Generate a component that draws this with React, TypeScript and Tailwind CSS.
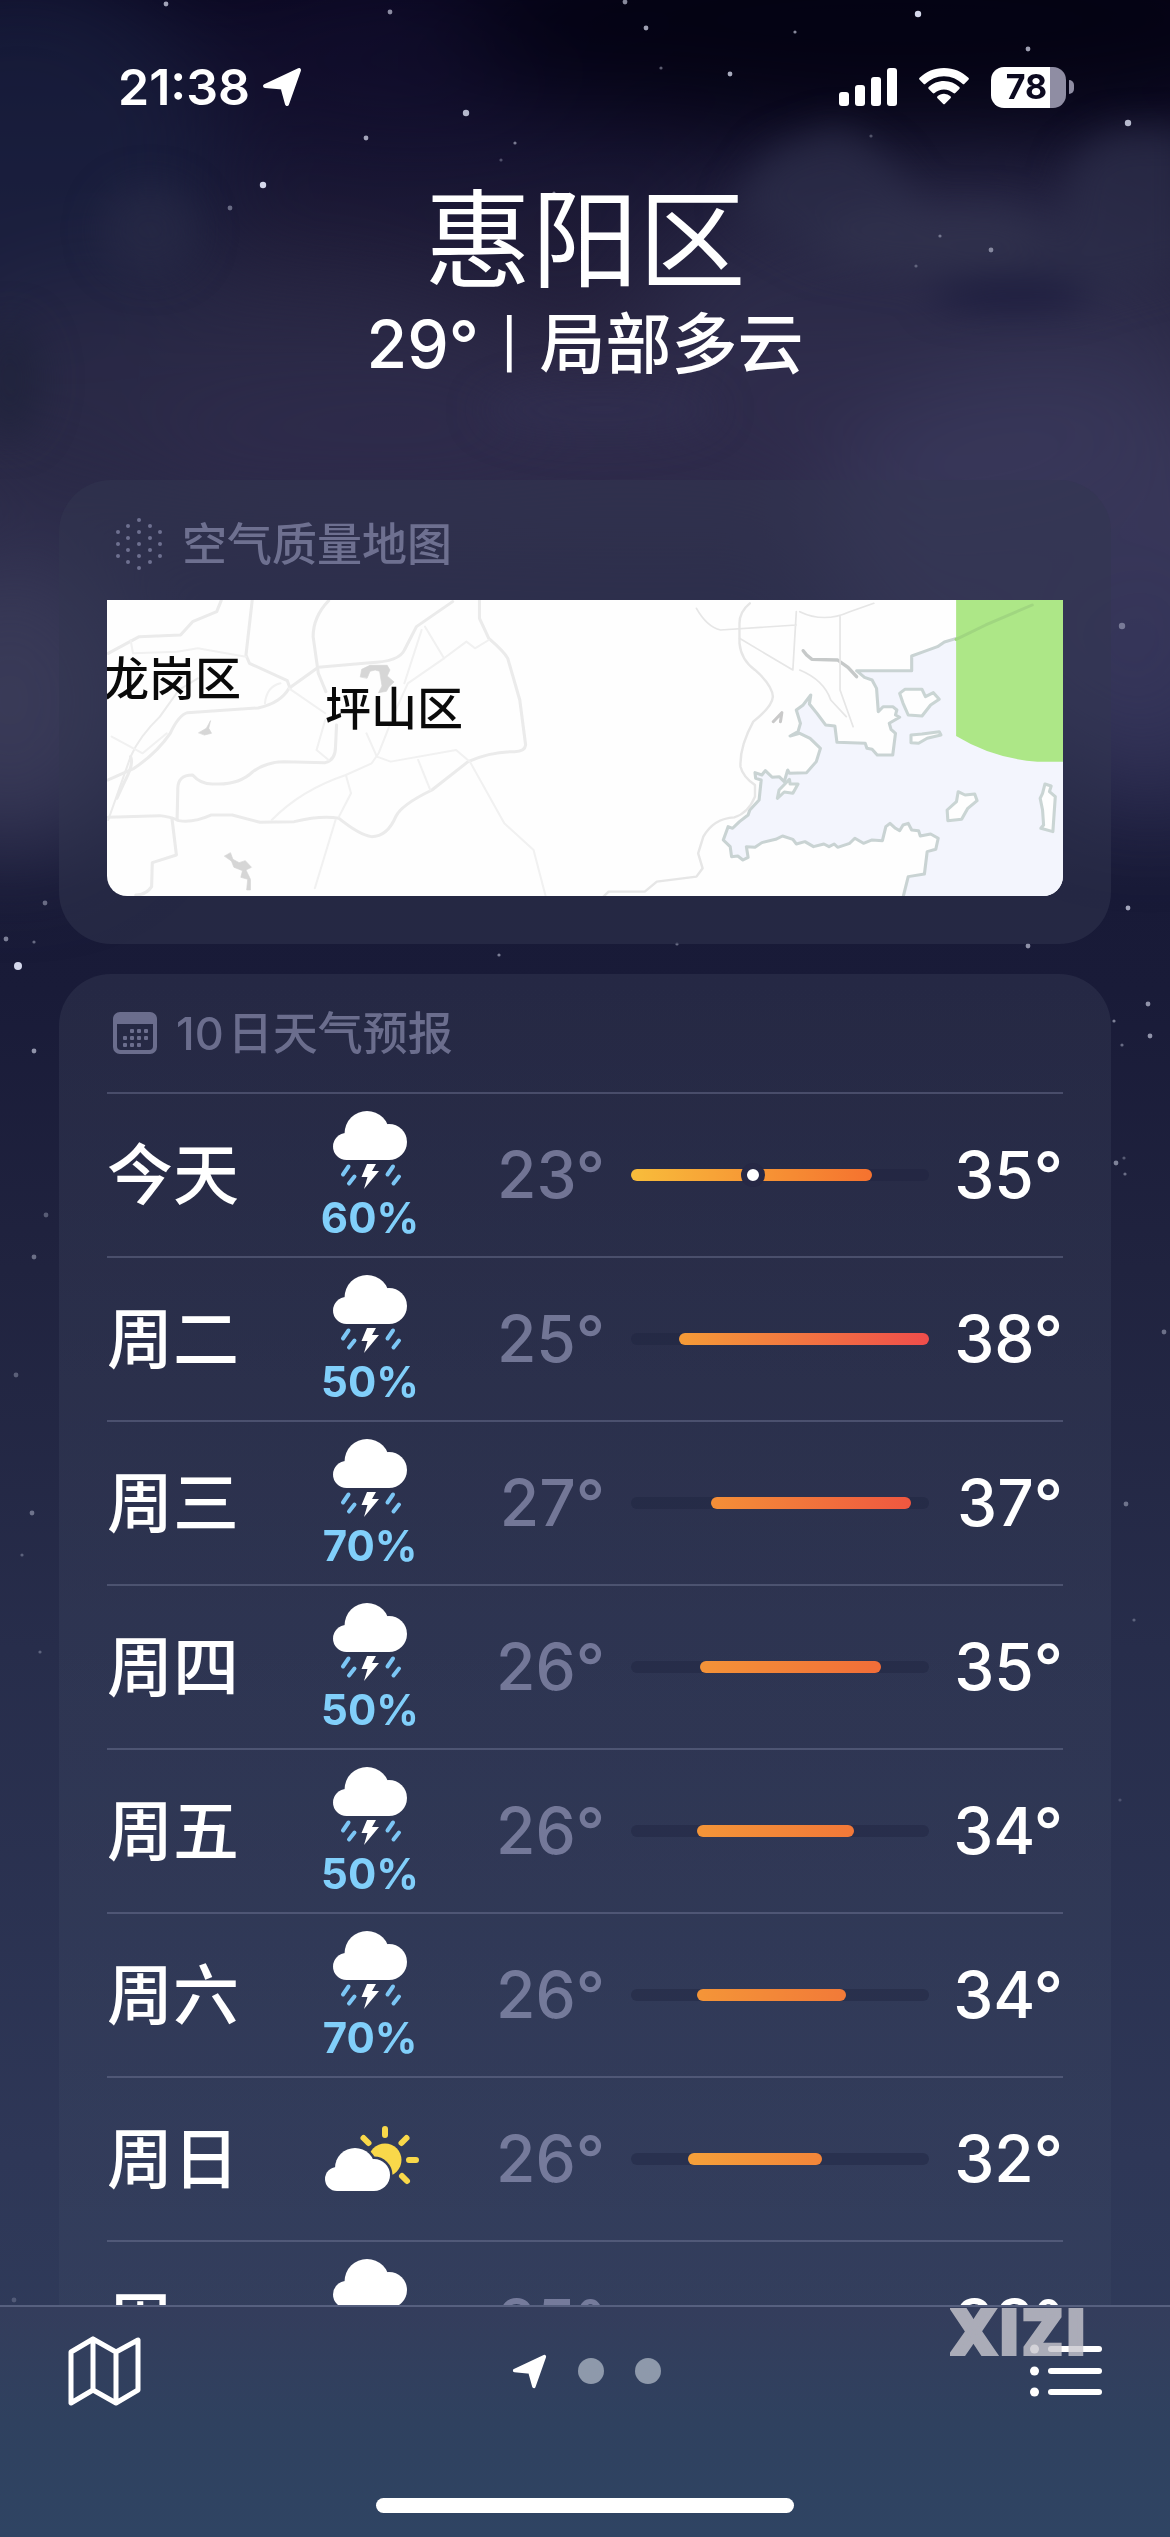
import React from "react";

type Day = {
  name: string;
  icon: "storm" | "sun";
  chance?: string;
  low: number;
  high: number;
  start: number;
  width: number;
  from: string;
  to: string;
  now?: number;
};

const DAYS: Day[] = [
  { name: "今天", icon: "storm", chance: "60%", low: 23, high: 35, start: 0, width: 81, from: "#f8bd3b", to: "#f5722f", now: 41 },
  { name: "周二", icon: "storm", chance: "50%", low: 25, high: 38, start: 16, width: 84, from: "#f59b37", to: "#ef4d4b" },
  { name: "周三", icon: "storm", chance: "70%", low: 27, high: 37, start: 27, width: 67, from: "#f48f37", to: "#ef5740" },
  { name: "周四", icon: "storm", chance: "50%", low: 26, high: 35, start: 23, width: 61, from: "#f49338", to: "#f16d38" },
  { name: "周五", icon: "storm", chance: "50%", low: 26, high: 34, start: 22, width: 53, from: "#f49538", to: "#f27838" },
  { name: "周六", icon: "storm", chance: "70%", low: 26, high: 34, start: 22, width: 50, from: "#f49538", to: "#f27a38" },
  { name: "周日", icon: "sun", low: 26, high: 32, start: 19, width: 45, from: "#f5a03a", to: "#f38539" },
  { name: "周一", icon: "storm", chance: "50%", low: 25, high: 33, start: 15, width: 53, from: "#f59b37", to: "#f38239" },
];

const STARS: [number, number, number, number][] = [
  [166, 4, 3, 0.7], [390, 12, 3, 0.6], [625, 2, 3, 0.6], [646, 28, 3, 0.7], [918, 14, 4, 0.95],
  [795, 32, 2, 0.6], [1028, 49, 3, 0.7], [661, 68, 2, 0.4], [730, 74, 3, 0.75], [466, 113, 4, 0.8],
  [1128, 123, 4, 0.8], [366, 138, 3, 0.7], [515, 143, 2, 0.5], [501, 160, 2, 0.3], [263, 185, 4, 0.95],
  [230, 208, 3, 0.4], [554, 193, 2, 0.5], [940, 236, 2, 0.4], [991, 250, 3, 0.5], [916, 266, 2, 0.3],
  [871, 136, 2, 0.3], [1122, 626, 4, 0.4], [18, 966, 5, 0.95], [1128, 908, 3, 0.7], [45, 903, 3, 0.4],
  [6, 939, 3, 0.5], [34, 942, 2, 0.4], [1028, 946, 3, 0.6], [499, 955, 2, 0.5], [677, 944, 2, 0.4],
  [34, 1051, 3, 0.6], [1148, 1004, 3, 0.6], [1114, 1021, 2, 0.5], [1150, 1036, 3, 0.6], [1122, 1045, 2, 0.4],
  [1116, 1163, 3, 0.5], [1125, 1174, 2, 0.4], [1124, 1158, 2, 0.3], [34, 1257, 3, 0.4], [46, 1215, 3, 0.3],
  [1164, 1332, 3, 0.4], [16, 1375, 3, 0.3], [32, 1513, 3, 0.4], [1126, 1504, 3, 0.4], [22, 1555, 2, 0.3],
  [1134, 1620, 2, 0.3], [40, 1652, 2, 0.3], [1120, 1800, 2, 0.2], [14, 2300, 3, 0.2],
];

function Sky() {
  return (
    <svg
      aria-hidden="true"
      className="pointer-events-none absolute inset-0 h-full w-full"
      viewBox="0 0 1170 2537"
      preserveAspectRatio="xMidYMin slice"
    >
      <defs>
        <filter id="haze" x="-100%" y="-100%" width="300%" height="300%" colorInterpolationFilters="sRGB">
          <feGaussianBlur stdDeviation="50" />
        </filter>
        <filter id="puff" x="-100%" y="-100%" width="300%" height="300%" colorInterpolationFilters="sRGB">
          <feGaussianBlur stdDeviation="18" />
        </filter>
      </defs>
      <g filter="url(#haze)">
        <ellipse cx="20" cy="160" rx="200" ry="200" fill="#1a2140" opacity="0.7" />
        <ellipse cx="420" cy="60" rx="220" ry="90" fill="#120d2e" opacity="0.5" />
        <ellipse cx="900" cy="20" rx="440" ry="110" fill="#030212" opacity="0.9" />
        <ellipse cx="230" cy="400" rx="330" ry="130" fill="#2b2b48" opacity="0.75" />
        <ellipse cx="940" cy="330" rx="300" ry="160" fill="#2f2f4d" opacity="0.75" />
        <ellipse cx="640" cy="450" rx="500" ry="90" fill="#302c4d" opacity="0.7" />
        <ellipse cx="1060" cy="540" rx="240" ry="180" fill="#3b3a5c" opacity="0.8" />
        <ellipse cx="10" cy="700" rx="130" ry="150" fill="#3b3c59" opacity="0.9" />
        <ellipse cx="1150" cy="690" rx="110" ry="110" fill="#36365a" opacity="0.8" />
      </g>
      <g filter="url(#puff)">
        <path d="M730 210 L770 150 L840 125 L890 160 L930 220 L1000 205 L1060 230 L1070 160 L1110 130 L1190 130 V270 L1080 300 L960 280 L820 260 Z" fill="#2c2d4a" opacity="0.75" />
        <ellipse cx="930" cy="240" rx="110" ry="34" fill="#34344f" opacity="0.5" />
        <ellipse cx="1010" cy="295" rx="80" ry="14" fill="#17163a" opacity="0.8" />
        <ellipse cx="150" cy="230" rx="50" ry="46" fill="#2b2d4a" opacity="0.5" />
        <ellipse cx="10" cy="380" rx="34" ry="60" fill="#1c2238" opacity="0.6" />
        <ellipse cx="600" cy="410" rx="120" ry="30" fill="#35345a" opacity="0.3" />
      </g>
      {STARS.map(([x, y, r, o]) => (
        <circle key={`${x}-${y}`} cx={x} cy={y} r={r * 0.8} fill="#dfe3f5" opacity={o} />
      ))}
    </svg>
  );
}

function LocationArrow({ className }: { className: string }) {
  return (
    <svg aria-hidden="true" viewBox="0 0 40 40" className={className} fill="currentColor">
      <path
        d="M37 3 L25 37 L20.500 20.500 L3 19 Z"
        stroke="currentColor"
        strokeWidth="4"
        strokeLinejoin="round"
      />
    </svg>
  );
}

function StatusBar() {
  return (
    <div className="flex h-[126px] items-center justify-between pt-12 pr-24 pl-[118px]">
      <div className="flex items-center gap-3">
        <time className="text-[50px] leading-none font-semibold">21:38</time>
        <LocationArrow className="size-10" />
      </div>
      <div className="flex items-center gap-[22px]">
        <svg role="img" aria-label="信号" viewBox="0 0 58 38" className="h-[38px] w-[58px]" fill="currentColor">
          <rect x="0" y="24" width="10" height="14" rx="3" />
          <rect x="16" y="17" width="10" height="21" rx="3" />
          <rect x="32" y="9" width="10" height="29" rx="3" />
          <rect x="48" y="0" width="10" height="38" rx="3" />
        </svg>
        <svg role="img" aria-label="无线网络" viewBox="0 0 50 38" className="h-[38px] w-[50px]" fill="currentColor">
          <path d="M25 0C15.500 0 6.800 3.700 0.600 9.800a1.400 1.400 0 0 0 0 2L4.500 15.800a1.400 1.400 0 0 0 2 0C11.300 11.100 17.800 8.200 25 8.200s13.700 2.900 18.500 7.600a1.400 1.400 0 0 0 2 0l3.900-4a1.400 1.400 0 0 0 0-2C43.200 3.700 34.500 0 25 0Z" />
          <path d="M25 13c-5.900 0-11.300 2.300-15.300 6.100a1.400 1.400 0 0 0 0 2l4 4a1.400 1.400 0 0 0 1.900 0A13.600 13.600 0 0 1 25 21.400c3.600 0 6.900 1.400 9.400 3.700a1.400 1.400 0 0 0 1.900 0l4-4a1.400 1.400 0 0 0 0-2A22.200 22.200 0 0 0 25 13Z" />
          <path d="M25 25.700c-2.500 0-4.800 1-6.500 2.600a1.300 1.300 0 0 0 0 1.900l5.500 5.600a1.400 1.400 0 0 0 2 0l5.500-5.600a1.300 1.300 0 0 0 0-1.900 9.400 9.400 0 0 0-6.500-2.600Z" />
        </svg>
        <div className="flex items-center gap-[3px]">
          <div className="flex h-[41px] w-[75px] items-center justify-center rounded-[13px] bg-[linear-gradient(90deg,#fff_79%,#8f8da3_79%)] pr-1">
            <span className="text-[34px] leading-none font-bold text-[#0c0a20]">78</span>
          </div>
          <span className="h-[14px] w-[5px] rounded-r-full bg-[#8f8da3]" />
        </div>
      </div>
    </div>
  );
}

function AirQualityIcon() {
  const dots: [number, number][] = [
    [24, 3], [13, 9], [35, 9], [3, 15], [24, 15], [45, 15], [13, 21], [35, 21], [24, 27],
    [3, 27], [45, 27], [13, 33], [35, 33], [3, 39], [24, 39], [45, 39], [13, 45], [35, 45], [24, 51],
  ];
  return (
    <svg aria-hidden="true" viewBox="0 0 48 54" className="h-[54px] w-12" fill="currentColor">
      {dots.map(([x, y]) => (
        <circle key={`${x}-${y}`} cx={x} cy={y} r="2" />
      ))}
    </svg>
  );
}

function CalendarIcon() {
  const dots: [number, number][] = [
    [18, 18], [25, 18], [32, 18], [11, 25], [18, 25], [25, 25], [32, 25], [11, 32], [18, 32], [25, 32],
  ];
  return (
    <svg aria-hidden="true" viewBox="0 0 44 42" className="h-[42px] w-11" fill="currentColor">
      <path
        fillRule="evenodd"
        d="M7 0h30a7 7 0 0 1 7 7v28a7 7 0 0 1-7 7H7a7 7 0 0 1-7-7V7a7 7 0 0 1 7-7ZM4 12v22a4 4 0 0 0 4 4h28a4 4 0 0 0 4-4V12Z"
      />
      {dots.map(([x, y]) => (
        <rect key={`${x}-${y}`} x={x - 1} y={y - 1} width="4" height="4" rx="1" />
      ))}
    </svg>
  );
}

function AirMap() {
  return (
    <div className="relative h-[296px] overflow-hidden rounded-b-[20px] bg-[#fefefe] text-[#0a0a0a]">
      <svg
        aria-hidden="true"
        viewBox="0 0 956 296"
        preserveAspectRatio="none"
        className="h-full w-full"
        fill="none"
        strokeLinejoin="round"
        strokeLinecap="round"
      >
        <g transform="translate(-47 -130) scale(0.3444 0.3333)">
          <g stroke="#ebebeb" strokeWidth="9">
            <path d="M140 550 L230 500 L350 495 L385 455 L455 425 L468 392" />
            <path d="M558 392 L540 555 L550 580 L660 632 L668 655" />
            <path d="M780 392 Q735 440 735 500 L750 610 L772 665" />
            <path d="M140 1050 L205 860 Q230 800 290 740 L345 660 L400 625" strokeWidth="6" />
            <path d="M140 930 L215 895 Q280 850 320 790 Q345 735 370 728 L575 714 Q640 700 665 655 L750 592 L900 578 Q985 575 1000 540 L1035 470 L1140 395" />
            <path d="M1218 392 V445 L1245 505 Q1290 545 1300 565 L1335 690 L1352 825 Q1350 845 1320 845 Q1250 845 1185 875 L1080 960 Q990 1005 975 1040 Q950 1100 905 1100 Q870 1095 810 1045 Q760 1035 680 1055 L580 1057 L500 1035 L440 1035 Q385 1060 345 1052 Q320 1040 290 1037 L140 1042" />
            <path d="M340 1050 L342 960 Q340 915 385 915 Q410 945 450 942 Q520 945 560 905 Q600 875 650 875 L770 878 Q800 870 800 830 L803 765" />
            <path d="M325 1045 L338 1155 L268 1178 L266 1250 Q250 1275 220 1275" />
            <path d="M205 860 Q215 880 190 930 L165 985" />
          </g>
          <g stroke="#f1f1f1" strokeWidth="6">
            <path d="M205 510 L212 550 L340 545 L400 535 L540 560" />
            <path d="M150 800 L240 850 L310 790" />
            <path d="M615 1050 Q700 960 830 915 L845 970 L810 1040 M830 915 L905 880 L925 850 L975 720 L1010 640 L1115 565 L1180 515 L1205 535 L1245 510" />
            <path d="M1060 470 L1115 565 M1050 480 L1000 640 M770 750 L745 840 L780 870 M890 790 L920 860 L960 875 L1150 840 L1190 875 L1290 1060 L1375 1140 L1410 1278" />
            <path d="M1040 870 L1075 960 M800 1050 L740 1255 M665 655 L770 730 M640 640 Q600 650 595 700" />
          </g>
          <g fill="#d6d6d6" stroke="#d6d6d6" strokeWidth="2">
            <path d="M872 620 L876 598 L900 586 H950 L958 600 L950 618 L970 636 L955 650 L948 664 L925 668 L935 648 L928 604 L915 600 L900 604 L892 624 Z" />
            <path d="M403 788 L425 775 L437 752 L432 775 L440 790 L420 795 Z" />
            <path d="M478 1158 L495 1148 L502 1168 L520 1178 L538 1172 L556 1192 L540 1200 L553 1228 V1260 H542 L545 1228 L525 1222 L530 1202 L505 1192 L498 1174 Z" />
          </g>
        </g>
        <g transform="translate(493 -20) scale(0.3444 0.3333)">
          <path
            fill="#f3f5fd"
            stroke="#c9d3d3"
            strokeWidth="9"
            d="M1360 60 H1260 L1120 130 L1045 172 L1000 186 L980 200 L940 215 L905 228 V272 H745 L768 292 L790 300 L803 325 L808 395 L822 380 L850 380 L862 390 L858 405 L870 412 L840 430 L845 448 L858 460 L850 525 H805 L790 508 L775 505 L770 490 L688 487 L682 438 L655 435 L630 400 L608 372 L612 345 L590 375 L570 390 L582 430 L575 455 L552 468 L580 460 L610 475 L640 505 L628 545 L600 578 L550 580 L545 570 L535 605 L520 590 L500 592 L480 572 L470 585 L450 578 L452 595 L468 600 L462 660 L435 690 L430 705 L405 725 L385 745 L372 740 L358 780 L378 800 L382 830 L400 828 L415 840 L430 832 L425 800 L450 802 L470 788 L510 778 L530 768 L560 778 L570 792 L595 785 L620 800 L650 792 L665 800 L680 792 L690 802 L725 790 L740 775 L765 790 L790 780 L820 782 L830 740 L842 730 L858 745 L870 752 L880 735 L895 730 L905 750 L925 752 L930 768 L960 762 L982 775 L975 808 L950 815 L942 882 L895 890 L878 960 H1400 Z"
          />
          <path stroke="#c6c9c9" strokeWidth="10" d="M590 212 L600 225 L615 238 L690 240 L720 262 L745 290" />
          <g fill="#fefefe" stroke="#cad5d4" strokeWidth="9">
            <path d="M870 340 L885 328 H935 L945 350 L968 338 L985 358 L960 375 L935 408 L895 405 L880 370 Z" />
            <path d="M903 465 L935 462 L985 455 L990 465 L950 475 L925 490 L903 488 Z" />
            <path d="M1040 635 L1060 645 L1088 642 L1095 662 L1068 685 L1050 718 L1010 722 L1008 690 L1035 665 Z" />
            <path d="M1285 640 L1292 612 L1310 618 L1305 635 L1322 650 L1315 755 L1280 745 L1288 735 L1285 690 L1278 655 Z" />
            <path d="M515 655 L520 630 L550 598 L552 612 L575 612 L560 640 L535 636 Z" />
          </g>
          <path stroke="#c9c9c9" strokeWidth="9" d="M503 425 L528 398 L524 425" />
          <g stroke="#e6e6e6" strokeWidth="7">
            <path d="M435 70 Q405 95 405 130 V190 Q410 240 450 270 Q500 315 502 350 Q500 380 445 425 Q405 500 408 560 Q415 590 450 615 L450 650 Q430 700 390 712 Q330 715 300 770 L285 820 L298 865 L280 890 L165 905 L130 935 L25 935 L10 950" />
            <path d="M280 85 Q310 140 350 150 L570 135 M405 175 L560 270 L570 95 M580 95 Q650 130 725 95 L795 70 M697 110 L697 330 L735 440 M580 270 Q650 300 670 360 L715 410" strokeWidth="5" />
          </g>
          <path d="M1034 60 H1346 V545 H1270 Q1140 535 1034 468 Z" fill="#ade787" />
          <path d="M1034 178 L1120 135 L1255 75" stroke="#a0d680" strokeWidth="9" />
        </g>
      </svg>
      <span className="absolute top-[55px] -left-1 text-[46px] leading-none font-medium whitespace-nowrap">龙岗区</span>
      <span className="absolute top-[85px] left-[218px] text-[46px] leading-none font-medium whitespace-nowrap">坪山区</span>
    </div>
  );
}

function StormIcon() {
  return (
    <svg role="img" aria-label="雷阵雨" viewBox="0 0 74 78" className="h-[78px] w-[74px]">
      <g fill="#fff">
        <circle cx="34" cy="22.500" r="22.500" />
        <circle cx="56" cy="31" r="18" />
        <circle cx="13.500" cy="35.500" r="13.500" />
        <rect x="13.500" y="30" width="43" height="19" />
        <path d="M34 53h9l-4 7h7L31 78l3.500-12h-6Z" />
      </g>
      <path
        d="M15.500 55.500l-5.500 8M21.500 65.500l-5.500 7M60 55.500l-5.500 8M66 65.500l-5.500 7"
        stroke="#7cc6f5"
        strokeWidth="4"
        strokeLinecap="round"
      />
    </svg>
  );
}

function SunCloudIcon() {
  return (
    <svg role="img" aria-label="局部多云" viewBox="0 0 95 66" className="ml-1 h-[66px] w-[95px]">
      <mask id="behind-cloud">
        <rect width="95" height="66" fill="#fff" />
        <g fill="#000" stroke="#000" strokeWidth="5">
          <circle cx="30" cy="42" r="20" />
          <circle cx="49" cy="49" r="16" />
        </g>
      </mask>
      <circle cx="60" cy="34" r="16.500" fill="#f9d84a" mask="url(#behind-cloud)" />
      <path
        d="M60 3v6M38.500 12l5 5M81.500 12l-5 5M84 34h7M77 50l5 5"
        stroke="#f9d84a"
        strokeWidth="6"
        strokeLinecap="round"
      />
      <g fill="#fff">
        <circle cx="30" cy="42" r="20" />
        <circle cx="49" cy="49" r="16" />
        <circle cx="12" cy="53" r="12" />
        <rect x="12" y="48" width="37" height="17" />
      </g>
    </svg>
  );
}

function DayRow({ day }: { day: Day }) {
  return (
    <li className="grid h-[164px] grid-cols-[200px_126px_172px_1fr_134px] items-center border-t-2 border-[#8a8fae]/35">
      <span className="text-[66px] leading-none font-medium">{day.name}</span>
      <div className="flex flex-col items-center gap-2">
        {day.icon === "storm" ? <StormIcon /> : <SunCloudIcon />}
        {day.chance && (
          <span className="text-[42px] leading-none font-bold text-[#81cffa]">{day.chance}</span>
        )}
      </div>
      <span className="text-right text-[64px] leading-none font-medium text-[#9a9cbe]/65">{day.low}°</span>
      <div className="pl-[26px]">
        <div className="relative h-3 rounded-full bg-[#1e223e]/40">
          <div
            className="absolute inset-y-0 rounded-full"
            style={{
              left: `${day.start}%`,
              width: `${day.width}%`,
              backgroundImage: `linear-gradient(90deg, ${day.from}, ${day.to})`,
            }}
          />
          {day.now !== undefined && (
            <div
              className="absolute -top-[6px] size-6 -translate-x-1/2 rounded-full border-6 border-[#262845] bg-white"
              style={{ left: `${day.now}%` }}
            />
          )}
        </div>
      </div>
      <span className="text-right text-[64px] leading-none font-medium">{day.high}°</span>
    </li>
  );
}

function BottomBar() {
  return (
    <footer className="relative flex h-[232px] shrink-0 flex-col items-center justify-between border-t-2 border-[#56607f] bg-linear-to-b from-[#343d5c] via-[#2f415f] to-[#2f4463] pb-6">
      <nav className="flex w-full items-center justify-between px-[66px] pt-[28px]">
        <button type="button" aria-label="地图">
          <svg
            viewBox="0 0 76 72"
            className="h-[72px] w-[76px]"
            fill="none"
            stroke="currentColor"
            strokeWidth="5"
            strokeLinejoin="round"
            strokeLinecap="round"
          >
            <path d="M5 17 L27 4 L50 17 L72 5 V55 L50 68 L27 55 L5 68 Z M27 4 V55 M50 17 V68" />
          </svg>
        </button>
        <div className="flex items-center gap-[31px]">
          <button type="button" aria-label="当前位置">
            <LocationArrow className="size-[35px]" />
          </button>
          <button type="button" aria-label="第二个城市" className="size-[26px] rounded-full bg-[#8e99ab]" />
          <button type="button" aria-label="第三个城市" className="size-[26px] rounded-full bg-[#8e99ab]" />
        </div>
        <button type="button" aria-label="城市列表">
          <svg viewBox="0 0 74 54" className="h-[54px] w-[74px]" fill="currentColor">
            <circle cx="4.500" cy="5" r="4.500" />
            <circle cx="4.500" cy="27" r="4.500" />
            <circle cx="4.500" cy="48" r="4.500" />
            <rect x="18" y="2" width="54" height="6" rx="3" />
            <rect x="18" y="24" width="54" height="6" rx="3" />
            <rect x="18" y="45" width="54" height="6" rx="3" />
          </svg>
        </button>
      </nav>
      <div className="h-[15px] w-[418px] rounded-full bg-white" />
      <span className="pointer-events-none absolute -top-1 right-[86px] flex gap-[6px] text-[58px] leading-none font-bold text-[#c9c8cf] opacity-80 [-webkit-text-stroke:6px_#c9c8cf]">
        <span>X</span>
        <span>I</span>
        <span>Z</span>
        <span>I</span>
      </span>
    </footer>
  );
}

export default function App() {
  return (
    <div className="relative flex h-screen flex-col overflow-hidden bg-[linear-gradient(180deg,#0b0822_0%,#171532_6%,#28243f_14%,#2b2a48_20%,#26274a_28%,#181a37_35%,#191b38_39%,#20233f_50%,#272d4b_65%,#2e3757_85%,#303e5d_100%)] font-[Inter,'Noto_Sans_CJK_SC',sans-serif] text-white">
      <Sky />
      <main className="relative min-h-0 flex-1 overflow-y-auto [scrollbar-width:none]">
        <StatusBar />
        <header className="mt-[54px] text-center">
          <h1 className="text-[107px] leading-[120px] font-normal">惠阳区</h1>
          <p className="mt-1 flex items-center justify-center gap-[22px] text-[66px] leading-[80px] font-medium">
            <span>29°</span>
            <span className="text-[48px]">|</span>
            <span>局部多云</span>
          </p>
        </header>
        <div className="mt-24 flex flex-col gap-[30px] px-[59px]">
          <section className="rounded-[52px] bg-[#323650]/50 px-12 pb-12">
            <h2 className="flex h-[120px] items-center gap-[19px] pt-2 pl-2 text-[45px] leading-none font-medium text-[#9a9cbe]/60">
              <AirQualityIcon />
              空气质量地图
            </h2>
            <AirMap />
          </section>
          <section className="rounded-[52px] bg-linear-to-b from-[#323650]/50 to-[#384462]/50 px-12">
            <h2 className="flex h-[118px] items-center gap-[19px] pl-[6px] text-[45px] leading-none font-medium text-[#9a9cbe]/60">
              <CalendarIcon />
              <span className="flex gap-1">
                <span>10</span>
                <span>日天气预报</span>
              </span>
            </h2>
            <ul>
              {DAYS.map((day) => (
                <DayRow key={day.name} day={day} />
              ))}
            </ul>
          </section>
        </div>
      </main>
      <BottomBar />
    </div>
  );
}
